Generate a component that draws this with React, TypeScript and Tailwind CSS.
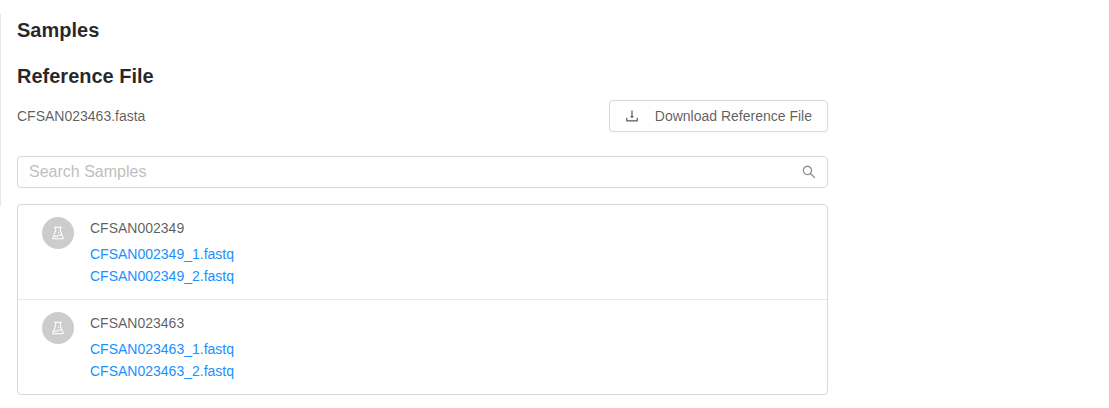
import {
  AiOutlineDownload,
  AiOutlineExperiment,
  AiOutlineSearch,
} from "react-icons/ai";

type Sample = { name: string; files: string[] };

const samples: Sample[] = [
  {
    name: "CFSAN002349",
    files: ["CFSAN002349_1.fastq", "CFSAN002349_2.fastq"],
  },
  {
    name: "CFSAN023463",
    files: ["CFSAN023463_1.fastq", "CFSAN023463_2.fastq"],
  },
];

function SampleRow({ sample }: { sample: Sample }) {
  return (
    <li className="flex items-start gap-4 px-6 py-3">
      <span className="flex size-8 shrink-0 items-center justify-center rounded-full bg-[#ccc] text-white">
        <AiOutlineExperiment size={16} />
      </span>
      <div>
        <h4 className="mb-1 leading-[22px]">{sample.name}</h4>
        {sample.files.map((file) => (
          <a
            key={file}
            href="#"
            className="block leading-[22px] text-[#1890ff]"
          >
            {file}
          </a>
        ))}
      </div>
    </li>
  );
}

export default function App() {
  return (
    <div className="flex h-[408px] items-start bg-white font-['Liberation_Sans',Arial,sans-serif] text-sm text-black/65">
      <div className="mt-3.5 h-48 w-px shrink-0 bg-[#e8e8e8]" />
      <main className="ml-4 w-[811px] pt-4">
        <h1 className="text-xl leading-7 font-semibold text-black/85">
          Samples
        </h1>
        <h2 className="mt-[18px] text-xl leading-7 font-semibold text-black/85">
          Reference File
        </h2>
        <div className="mt-2.5 flex h-8 items-center justify-between">
          <span>CFSAN023463.fasta</span>
          <button className="flex h-8 items-center gap-4 rounded border border-[#d9d9d9] bg-white px-[15px] shadow-[0_2px_0_rgba(0,0,0,0.015)]">
            <AiOutlineDownload size={16} className="-mx-px" />
            <span>Download Reference File</span>
          </button>
        </div>
        <label className="mt-6 flex h-8 items-center rounded border border-[#d9d9d9] pr-[11px] pl-[11px]">
          <input
            type="text"
            placeholder="Search Samples"
            className="h-full min-w-0 flex-1 text-base outline-none placeholder:text-[#bfbfbf]"
          />
          <AiOutlineSearch size={16} className="-mx-px text-black/45" />
        </label>
        <ul className="mt-4 divide-y divide-[#e8e8e8] rounded border border-[#d9d9d9]">
          {samples.map((sample) => (
            <SampleRow key={sample.name} sample={sample} />
          ))}
        </ul>
      </main>
    </div>
  );
}
